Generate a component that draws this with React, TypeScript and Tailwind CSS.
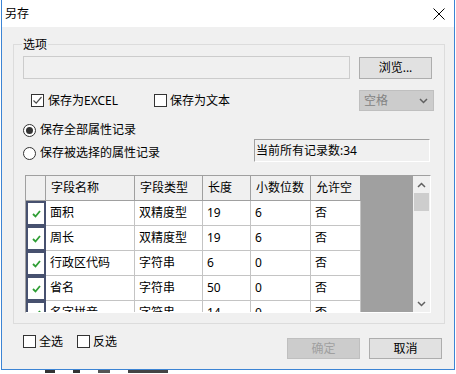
import React from 'react';

const rows = [
  ['面积', '双精度型', '19', '6', '否'],
  ['周长', '双精度型', '19', '6', '否'],
  ['行政区代码', '字符串', '6', '0', '否'],
  ['省名', '字符串', '50', '0', '否'],
  ['名字拼音', '字符串', '14', '0', '否'],
];

const headers = ['字段名称', '字段类型', '长度', '小数位数', '允许空'];
const widths = ['w-[89px]', 'w-[68px]', 'w-[48px]', 'w-[60px]', 'w-[50px]'];

function CheckBox({ checked }: { checked?: boolean }) {
  return (
    <span className="w-[13px] h-[13px] border border-[#333333] bg-white flex items-center justify-center shrink-0">
      {checked && (
        <svg width="11" height="11" viewBox="0 0 11 11">
          <polyline points="1.5,5.5 4.2,8.2 9.5,2" fill="none" stroke="#4d4d4d" strokeWidth="1.2" />
        </svg>
      )}
    </span>
  );
}

function Radio({ checked }: { checked?: boolean }) {
  return (
    <span className="w-[13px] h-[13px] rounded-full border border-[#333333] bg-white flex items-center justify-center shrink-0">
      {checked && <span className="w-[7px] h-[7px] rounded-full bg-[#333333]" />}
    </span>
  );
}

function Chevron({ up }: { up?: boolean }) {
  return (
    <svg width="9" height="6" viewBox="0 0 9 6">
      <polyline
        points={up ? '1,5 4.5,1.5 8,5' : '1,1 4.5,4.5 8,1'}
        fill="none"
        stroke="#606060"
        strokeWidth="1.5"
      />
    </svg>
  );
}

export default function App() {
  return (
    <div className="w-[456px] h-[374px] bg-white overflow-hidden font-['Noto_Sans','Noto_Sans_CJK_SC',sans-serif] text-[12px] text-black">
      <div className="ml-[1px] w-[454px] h-[370px] flex flex-col bg-[#f0f0f0] border-l border-r border-b border-[#3c84d4]">
        {/* title bar */}
        <div className="h-[27px] bg-white flex items-center justify-between pl-[3px] pr-[9px] shrink-0">
          <span className="text-[12px] leading-none">另存</span>
          <svg width="12" height="12" viewBox="0 0 12 12">
            <line x1="0.5" y1="0.5" x2="11.5" y2="11.5" stroke="#000" strokeWidth="1" />
            <line x1="11.5" y1="0.5" x2="0.5" y2="11.5" stroke="#000" strokeWidth="1" />
          </svg>
        </div>

        <div className="flex flex-col pl-[11px]">
          {/* options group */}
          <div className="mt-[17px] relative w-[432px] h-[280px] border border-[#dcdcdc] pl-[9px]">
            <span className="absolute left-[8px] -top-[8px] h-[16px] leading-[16px] bg-[#f0f0f0] px-[1px]">选项</span>

            <div className="mt-[11px] flex items-center h-[23px]">
              <div className="w-[327px] h-[23px] border border-[#cccccc] bg-[#f0f0f0]" />
              <div className="ml-[9px] w-[73px] h-[22px] border border-[#adadad] bg-[#e1e1e1] flex items-center justify-center">
                浏览...
              </div>
            </div>

            <div className="mt-[11px] flex items-center h-[21px] pl-[8px]">
              <div className="w-[123px] flex items-center gap-[4px]">
                <CheckBox checked />
                <span>保存为EXCEL</span>
              </div>
              <div className="w-[205px] flex items-center gap-[3px]">
                <CheckBox />
                <span>保存为文本</span>
              </div>
              <div className="w-[75px] h-[21px] border border-[#bfbfbf] bg-[#cccccc] flex items-center justify-between pl-[4px] pr-[5px] text-[#838383]">
                <span>空格</span>
                <Chevron />
              </div>
            </div>

            <div className="mt-[11px] flex items-center h-[16px] gap-[4px]">
              <Radio checked />
              <span>保存全部属性记录</span>
            </div>

            <div className="mt-[1px] flex h-[23px]">
              <div className="w-[231px] pt-[6px]">
                <div className="flex items-center h-[16px] gap-[4px]">
                  <Radio />
                  <span>保存被选择的属性记录</span>
                </div>
              </div>
              <div className="w-[176px] h-[23px] border-t border-l border-[#a0a0a0] border-b-white border-r-white border-b border-r flex items-center pl-[1px]">
                当前所有记录数:34
              </div>
            </div>

            {/* field grid */}
            <div className="mt-[13px] ml-[2px] w-[406px] h-[138px] border-t border-l border-[#a0a0a0] border-b border-r border-b-white border-r-white flex overflow-hidden">
              <div className="w-[335px] flex flex-col bg-white">
                <div className="h-[25px] flex shrink-0 bg-[#f0f0f0]">
                  <div className="w-[20px] border-r border-b border-[#a0a0a0]" />
                  {headers.map((h, i) => (
                    <div
                      key={h}
                      className={`${widths[i]} border-r border-b border-[#a0a0a0] flex items-center pl-[5px]`}
                    >
                      {h}
                    </div>
                  ))}
                </div>
                {rows.map((r, ri) => (
                  <div key={ri} className="h-[25px] flex shrink-0">
                    <div className="w-[20px] bg-[#47516f] p-[2px]">
                      <div className="w-full h-full bg-white flex items-center justify-center">
                        <svg width="9" height="8" viewBox="0 0 9 8">
                          <polyline points="1,4 3.5,6.5 8,1" fill="none" stroke="#2f9e35" strokeWidth="1.8" />
                        </svg>
                      </div>
                    </div>
                    {r.map((c, ci) => (
                      <div
                        key={ci}
                        className={`${widths[ci]} border-r border-b border-[#c4c4c4] flex items-center pl-[4px]`}
                      >
                        {c}
                      </div>
                    ))}
                  </div>
                ))}
              </div>
              <div className="w-[52px] bg-[#a0a0a0]" />
              <div className="w-[17px] flex flex-col bg-[#f0f0f0]">
                <div className="h-[17px] flex items-center justify-center">
                  <Chevron up />
                </div>
                <div className="mx-[1px] h-[18px] bg-[#cdcdcd]" />
                <div className="flex-1" />
                <div className="h-[17px] flex items-center justify-center">
                  <Chevron />
                </div>
              </div>
            </div>
          </div>

          {/* bottom row */}
          <div className="flex items-start w-[429px]">
            <div className="ml-[10px] mt-[11px] flex items-center h-[13px]">
              <div className="w-[54px] flex items-center gap-[3px]">
                <CheckBox />
                <span>全选</span>
              </div>
              <div className="flex items-center gap-[3px]">
                <CheckBox />
                <span>反选</span>
              </div>
            </div>
            <div className="ml-auto mt-[14px] flex gap-[9px]">
              <div className="w-[73px] h-[21px] border border-[#bfbfbf] bg-[#cccccc] text-[#a0a0a0] flex items-center justify-center">
                确定
              </div>
              <div className="w-[73px] h-[21px] border border-[#adadad] bg-[#e1e1e1] flex items-center justify-center">
                取消
              </div>
            </div>
          </div>
        </div>
      </div>
      <div className="h-[4px] flex gap-[18px] pl-[45px]">
        <div className="w-[10px] h-[3px] bg-[#333333]" />
        <div className="w-[7px] h-[3px] bg-[#333333]" />
        <div className="w-[12px] h-[3px] bg-[#555555]" />
        <div className="w-[40px] h-[3px] bg-[#444444]" />
      </div>
    </div>
  );
}
